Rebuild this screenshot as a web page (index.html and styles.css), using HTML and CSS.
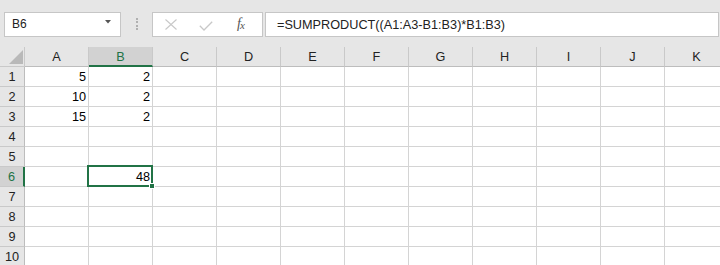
FILE: index.html
```html
<!DOCTYPE html>
<html>
<head>
<meta charset="utf-8">
<link rel="stylesheet" href="styles.css">
</head>
<body>
<div class="app">
  <div class="toolbar">
    <div class="namebox">
      <span class="name">B6</span>
      <svg class="arrow" width="6" height="4" viewBox="0 0 6 4"><path d="M0 0H6L3 3.5Z" fill="#555"/></svg>
    </div>
    <div class="grip"><i></i><i></i><i></i><i></i></div>
    <div class="fxbox">
      <svg class="ico" width="12" height="11" viewBox="0 0 12 11"><path d="M0.5 0.5L11.5 10.5M11.5 0.5L0.5 10.5" stroke="#c8c8c8" stroke-width="1.1" fill="none"/></svg>
      <svg class="ico check" width="14" height="10" viewBox="0 0 14 10"><path d="M0.8 4.8L5 9L13.2 0.8" stroke="#c8c8c8" stroke-width="1.3" fill="none"/></svg>
      <span class="fx">f<span class="x">x</span></span>
    </div>
    <div class="formula"><span class="ftext">=SUMPRODUCT((A1:A3-B1:B3)*B1:B3)</span></div>
  </div>
  <div class="sheet">
    <div class="hd corner"><span class="tri"></span></div>
    <div class="hd col">A</div><div class="hd col sel-col">B</div><div class="hd col">C</div><div class="hd col">D</div><div class="hd col">E</div><div class="hd col">F</div><div class="hd col">G</div><div class="hd col">H</div><div class="hd col">I</div><div class="hd col">J</div><div class="hd col">K</div>

    <div class="hd row">1</div><div class="c">5</div><div class="c">2</div><div class="c"></div><div class="c"></div><div class="c"></div><div class="c"></div><div class="c"></div><div class="c"></div><div class="c"></div><div class="c"></div><div class="c"></div>
    <div class="hd row">2</div><div class="c">10</div><div class="c">2</div><div class="c"></div><div class="c"></div><div class="c"></div><div class="c"></div><div class="c"></div><div class="c"></div><div class="c"></div><div class="c"></div><div class="c"></div>
    <div class="hd row">3</div><div class="c">15</div><div class="c">2</div><div class="c"></div><div class="c"></div><div class="c"></div><div class="c"></div><div class="c"></div><div class="c"></div><div class="c"></div><div class="c"></div><div class="c"></div>
    <div class="hd row">4</div><div class="c"></div><div class="c"></div><div class="c"></div><div class="c"></div><div class="c"></div><div class="c"></div><div class="c"></div><div class="c"></div><div class="c"></div><div class="c"></div><div class="c"></div>
    <div class="hd row">5</div><div class="c"></div><div class="c"></div><div class="c"></div><div class="c"></div><div class="c"></div><div class="c"></div><div class="c"></div><div class="c"></div><div class="c"></div><div class="c"></div><div class="c"></div>
    <div class="hd row sel-row">6</div><div class="c"></div><div class="c active">48<span class="handle"></span></div><div class="c"></div><div class="c"></div><div class="c"></div><div class="c"></div><div class="c"></div><div class="c"></div><div class="c"></div><div class="c"></div><div class="c"></div>
    <div class="hd row">7</div><div class="c"></div><div class="c"></div><div class="c"></div><div class="c"></div><div class="c"></div><div class="c"></div><div class="c"></div><div class="c"></div><div class="c"></div><div class="c"></div><div class="c"></div>
    <div class="hd row">8</div><div class="c"></div><div class="c"></div><div class="c"></div><div class="c"></div><div class="c"></div><div class="c"></div><div class="c"></div><div class="c"></div><div class="c"></div><div class="c"></div><div class="c"></div>
    <div class="hd row">9</div><div class="c"></div><div class="c"></div><div class="c"></div><div class="c"></div><div class="c"></div><div class="c"></div><div class="c"></div><div class="c"></div><div class="c"></div><div class="c"></div><div class="c"></div>
    <div class="hd row">10</div><div class="c"></div><div class="c"></div><div class="c"></div><div class="c"></div><div class="c"></div><div class="c"></div><div class="c"></div><div class="c"></div><div class="c"></div><div class="c"></div><div class="c"></div>
  </div>
</div>
</body>
</html>
```

FILE: styles.css
```css
* { box-sizing: border-box; }
html, body { margin: 0; padding: 0; background: #fff; }
body {
  width: 720px;
  height: 265px;
  overflow: hidden;
  font-family: "Liberation Sans", Arial, sans-serif;
  color: #000;
}
.app { width: 720px; height: 265px; overflow: hidden; }

.toolbar {
  height: 47px;
  background: #e6e6e6;
  display: flex;
  align-items: flex-start;
  padding: 12px 0 0 4px;
}
.namebox {
  flex: none;
  width: 117px;
  height: 25px;
  background: #fff;
  border: 1px solid #c6c6c6;
  display: flex;
  align-items: center;
  justify-content: space-between;
  padding: 0 8px 2px 7px;
}
.name { font-size: 12px; color: #222; }
.arrow { margin-top: -4px; margin-right: 1px; }
.grip {
  flex: none;
  width: 31px;
  height: 25px;
  display: flex;
  flex-direction: column;
  align-items: center;
  justify-content: center;
  gap: 1.6px;
  padding-bottom: 1px;
}
.grip i { display: block; width: 2px; height: 2px; background: #b0b0b0; }
.fxbox {
  flex: none;
  width: 111px;
  height: 25px;
  background: #fff;
  border: 1px solid #c6c6c6;
  display: flex;
  align-items: center;
  padding: 0 0 0 12px;
}
.ico { display: block; }
.check { margin-left: 22px; margin-top: 3px; }
.fx {
  margin-left: 24px;
  font-family: "Liberation Serif", "Times New Roman", serif;
  font-style: italic;
  font-size: 14px;
  color: #555;
  margin-top: -2px;
}
.fx .x { font-size: 11px; margin-left: -1px; position: relative; top: 1px; }
.formula {
  flex: none;
  margin-left: 2px;
  width: 454px;
  height: 25px;
  background: #fff;
  border: 1px solid #c6c6c6;
  font-size: 12.7px;
  color: #222;
  line-height: 22px;
  display: flex;
  align-items: center;
}
.ftext { margin-left: 11px; }

.sheet {
  display: grid;
  grid-template-columns: 25px repeat(11, 64px);
  grid-auto-rows: 20px;
  font-size: 12.7px;
}
.hd {
  background: #e6e6e6;
  color: #222;
  border-right: 1px solid #c9c9c9;
  border-bottom: 1px solid #c9c9c9;
  text-align: center;
  line-height: 20px;
}
.corner { position: relative; }
.tri {
  position: absolute;
  left: 9px;
  top: 3px;
  width: 0;
  height: 0;
  border-left: 14px solid transparent;
  border-bottom: 14px solid #b9b9b9;
}
.col { border-bottom-color: #bdbdbd; }
.sel-col {
  background: #d2d2d2;
  color: #217346;
  border-bottom: 2px solid #217346;
}
.row { border-right-color: #bdbdbd; line-height: 21px; }
.sel-row {
  background: #d2d2d2;
  color: #217346;
  border-right: 2px solid #217346;
}
.c {
  border-right: 1px solid #d4d4d4;
  border-bottom: 1px solid #d4d4d4;
  text-align: right;
  padding-right: 2px;
  line-height: 21px;
  white-space: nowrap;
}
.active { position: relative; }
.active::after {
  content: "";
  position: absolute;
  left: -2px;
  top: -2px;
  right: -1px;
  bottom: -1px;
  border: 2px solid #217346;
  pointer-events: none;
}
.handle {
  position: absolute;
  right: -3px;
  bottom: -3px;
  width: 6px;
  height: 6px;
  background: #217346;
  border: 1px solid #fff;
  z-index: 2;
}
```
